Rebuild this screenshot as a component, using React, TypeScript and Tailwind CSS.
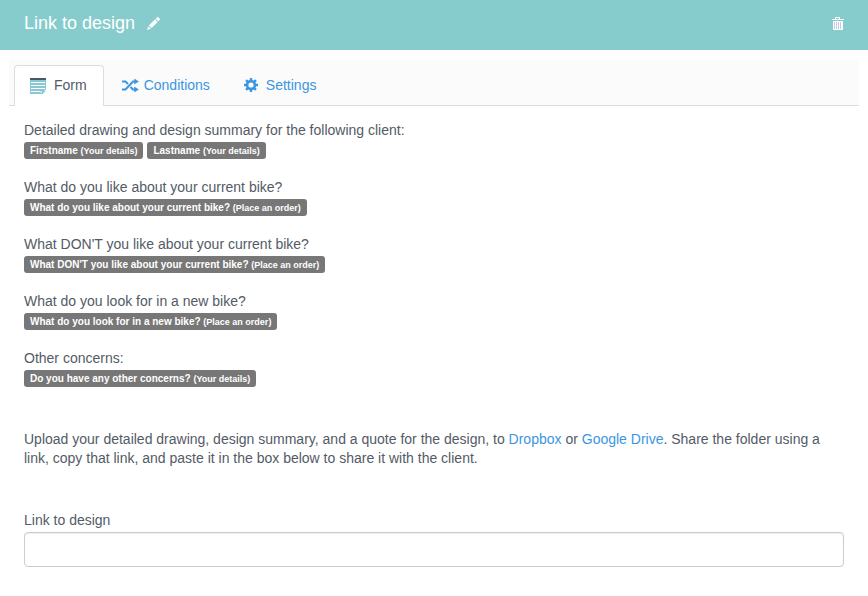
import type { ReactNode } from "react";

type Field = { label: string; source: string };
type Question = { text: string; fields: Field[] };

const questions: Question[] = [
  {
    text: "Detailed drawing and design summary for the following client:",
    fields: [
      { label: "Firstname", source: "Your details" },
      { label: "Lastname", source: "Your details" },
    ],
  },
  {
    text: "What do you like about your current bike?",
    fields: [{ label: "What do you like about your current bike?", source: "Place an order" }],
  },
  {
    text: "What DON'T you like about your current bike?",
    fields: [{ label: "What DON'T you like about your current bike?", source: "Place an order" }],
  },
  {
    text: "What do you look for in a new bike?",
    fields: [{ label: "What do you look for in a new bike?", source: "Place an order" }],
  },
  {
    text: "Other concerns:",
    fields: [{ label: "Do you have any other concerns?", source: "Your details" }],
  },
];

function PencilIcon() {
  return (
    <svg className="h-[13px] w-[13px]" viewBox="0 0 13 13" fill="currentColor" aria-hidden="true">
      <path d="M10 .4a1.100 1.100 0 0 1 1.500 0l1.100 1.100a1.100 1.100 0 0 1 0 1.500l-1.300 1.300-2.600-2.600zM8.100 2.300l2.600 2.600-6.200 6.200-2.600-2.600zM1.300 9.200l2.600 2.600L0 13z" />
    </svg>
  );
}

function TrashIcon() {
  return (
    <svg className="h-[13px] w-3" viewBox="0 0 12 13" aria-hidden="true">
      <path d="M3 2V1a1 1 0 0 1 1-1h3a1 1 0 0 1 1 1v1h4v1H0V2zM4 1v1h3V1z" fill="currentColor" fillRule="evenodd" />
      <path d="M1 4h10v8a1 1 0 0 1-1 1H2a1 1 0 0 1-1-1z" fill="currentColor" />
      <path d="M2.500 5v7M4.500 5v7M6.500 5v7M8.500 5v7" stroke="#c6c9ee" />
    </svg>
  );
}

function FormIcon() {
  return (
    <svg className="mt-0.5 mr-1 h-4 w-4" viewBox="0 0 16 16" aria-hidden="true">
      <path d="M0 2h16v9l-5 5H0z" fill="#86c9d3" />
      <path d="M0 0h16v2H0z" fill="#4c5667" />
      <path d="M1 4.500h14M1 7.500h14M1 10.500h14M1 13.500h9" stroke="#fff" />
      <path d="M10 16v-3.500h6L12.500 16z" fill="#86c9d3" />
      <path d="M11 13v2" stroke="#fff" />
    </svg>
  );
}

function RandomIcon() {
  return (
    <svg className="h-[13px] w-[18px]" viewBox="0 0 18 13" fill="none" stroke="currentColor" strokeWidth="2" aria-hidden="true">
      <path d="M0 2.500h3.500L6 5M8.500 8l2.500 2.500h2M0 10.500h3.500l7.500-8h2" />
      <path d="M12.500 0v5L16.500 2.500zM12.500 8v5l4-2.500z" fill="currentColor" stroke="currentColor" strokeWidth="0.500" />
    </svg>
  );
}

function CogIcon() {
  return (
    <svg className="mr-1 h-3.5 w-3.5" viewBox="0 0 14 14" aria-hidden="true">
      <g fill="none" stroke="currentColor">
        <circle cx="7" cy="7" r="3.900" strokeWidth="2.600" />
        <path
          d="M7 0v2.500M7 11.500V14M0 7h2.500M11.500 7H14M2.050 2.050l1.800 1.800M10.150 10.150l1.800 1.800M2.050 11.950l1.800-1.800M10.150 3.850l1.800-1.800"
          strokeWidth="2.400"
        />
      </g>
    </svg>
  );
}

type TabProps = { icon: ReactNode; selected?: boolean; children: ReactNode };

function Tab({ icon, selected = false, children }: TabProps) {
  return (
    <button
      type="button"
      role="tab"
      aria-selected={selected}
      className={
        selected
          ? "-mb-px flex h-[41px] items-center gap-1 rounded-t border border-b-0 border-[#ddd] bg-white pr-4 pb-0.5 pl-[15px]"
          : "flex h-10 items-center gap-1 px-4 text-[#3a96e2]"
      }
    >
      {icon}
      {children}
    </button>
  );
}

function Badge({ label, source }: Field) {
  return (
    <span className="h-[17px] rounded-[3px] bg-[#777] px-1.5 text-[10px] leading-[17px] font-bold whitespace-nowrap text-white">
      {label} <span className="text-[9px]">({source})</span>
    </span>
  );
}

export default function App() {
  return (
    <div className="bg-white font-['Liberation_Sans',Arial,sans-serif] text-sm leading-[19px] text-[#535b66]">
      <header className="flex h-[50px] items-center justify-between bg-[#87cccc] px-6 pb-1 text-white">
        <div className="flex items-center gap-3">
          <h1 className="text-lg">Link to design</h1>
          <button type="button" aria-label="Edit name">
            <PencilIcon />
          </button>
        </div>
        <button type="button" aria-label="Delete">
          <TrashIcon />
        </button>
      </header>

      <div
        role="tablist"
        className="mx-[9px] mt-2.5 flex h-[46px] items-end gap-0.5 border-b border-[#ddd] bg-[#fbfbfb] px-[5px]"
      >
        <Tab icon={<FormIcon />} selected>
          Form
        </Tab>
        <Tab icon={<RandomIcon />}>Conditions</Tab>
        <Tab icon={<CogIcon />}>Settings</Tab>
      </div>

      <main className="px-6 pt-[15px]">
        <div className="flex flex-col gap-[19px]">
          {questions.map((question) => (
            <section key={question.text}>
              <p>{question.text}</p>
              <div className="flex flex-wrap gap-1 pt-0.5">
                {question.fields.map((field) => (
                  <Badge key={field.label} {...field} />
                ))}
              </div>
            </section>
          ))}
        </div>

        <p className="mt-[43px]">
          Upload your detailed drawing, design summary, and a quote for the design, to{" "}
          <a href="#dropbox" className="text-[#3a96e2]">Dropbox</a> or{" "}
          <a href="#google-drive" className="text-[#3a96e2]">Google Drive</a>. Share the folder using a
          link, copy that link, and paste it in the box below to share it with the client.
        </p>

        <div className="mt-[43px] pb-7">
          <label htmlFor="design-link" className="block">
            Link to design
          </label>
          <input
            id="design-link"
            type="text"
            className="mt-0.5 block h-[35px] w-full rounded border border-[#ccc] px-3 shadow-[inset_0_1px_1px_rgba(0,0,0,0.075)]"
          />
        </div>
      </main>
    </div>
  );
}
